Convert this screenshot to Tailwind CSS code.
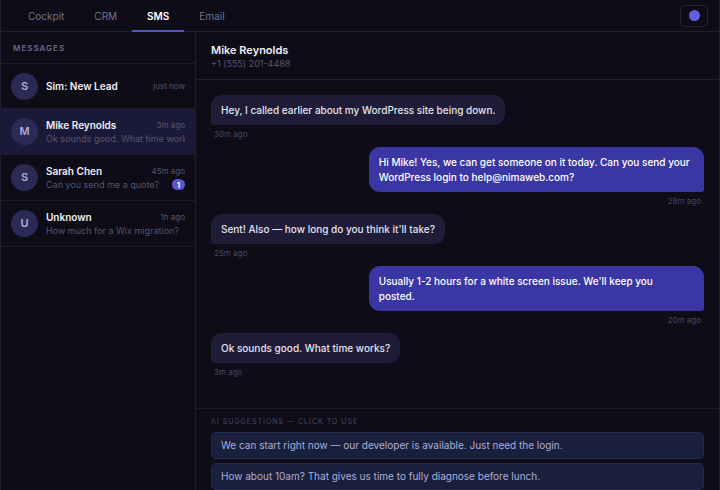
<!DOCTYPE html>
<html lang="en">
<head>
  <meta charset="UTF-8" />
  <meta name="viewport" content="width=device-width, initial-scale=1.0" />
  <title>SMS | Messages</title>
  <script src="https://cdn.jsdelivr.net/npm/@tailwindcss/browser@4"></script>
</head>
<body class="bg-[#0d0c17] font-['Inter',sans-serif] text-[#e4e3f0]">
  <div class="flex flex-col h-screen overflow-hidden border-x border-[#1e1d33]">

    <!-- Top bar -->
    <header class="flex items-stretch justify-between h-8 shrink-0 border-b border-[#211f33] pl-3 pr-[11px]">
      <nav class="flex -mb-px text-[10px] text-[#74728f]">
        <a href="#" class="flex items-center px-[15px]">Cockpit</a>
        <a href="#" class="flex items-center px-[15px]">CRM</a>
        <a href="#" class="flex items-center px-[15px] font-semibold text-white border-b-2 border-[#5651c4] pt-[2px]">SMS</a>
        <a href="#" class="flex items-center px-[15px]">Email</a>
      </nav>
      <button type="button" aria-label="Status" class="self-center flex items-center justify-center w-7 h-[22px] rounded-[5px] border border-[#26243a]">
        <span class="w-[11px] h-[11px] rounded-full bg-[#6460e0]"></span>
      </button>
    </header>

    <div class="flex flex-1 min-h-0">

      <!-- Conversation list -->
      <aside class="w-[195px] shrink-0 border-r border-[#211f33]">
        <h2 class="flex items-center h-8 px-3 border-b border-[#1c1b2c] text-[8px] font-semibold tracking-[1px] text-[#6a6884]">MESSAGES</h2>
        <ul>
          <li>
            <a href="#" class="flex items-center gap-2 h-[45px] px-[10px] border-b border-[#1c1b2c]">
              <span class="flex items-center justify-center w-[27px] h-[27px] shrink-0 rounded-full bg-[#2b2955] text-[11px] font-semibold text-[#b0addb]">S</span>
              <span class="flex flex-1 min-w-0 items-center justify-between">
                <span class="text-[10px] leading-[14px] font-semibold text-[#f0eff8]">Sim: New Lead</span>
                <span class="text-[8px] text-[#57556f]">just now</span>
              </span>
            </a>
          </li>
          <li>
            <a href="#" class="flex items-center gap-2 h-[46px] px-[10px] border-b border-[#1c1b2c] bg-[#1b1938]">
              <span class="flex items-center justify-center w-[27px] h-[27px] shrink-0 rounded-full bg-[#2b2955] text-[11px] font-semibold text-[#b0addb]">M</span>
              <span class="flex-1 min-w-0">
                <span class="flex items-center justify-between">
                  <span class="text-[10px] leading-[14px] font-semibold text-[#f0eff8]">Mike Reynolds</span>
                  <span class="text-[8px] text-[#57556f]">3m ago</span>
                </span>
                <span class="block overflow-hidden whitespace-nowrap text-[9px] leading-[14px] text-[#57556f]">Ok sounds good. What time works?</span>
              </span>
            </a>
          </li>
          <li>
            <a href="#" class="flex items-center gap-2 h-[46px] px-[10px] border-b border-[#1c1b2c]">
              <span class="flex items-center justify-center w-[27px] h-[27px] shrink-0 rounded-full bg-[#2b2955] text-[11px] font-semibold text-[#b0addb]">S</span>
              <span class="flex-1 min-w-0">
                <span class="flex items-center justify-between">
                  <span class="text-[10px] leading-[14px] font-semibold text-[#f0eff8]">Sarah Chen</span>
                  <span class="text-[8px] text-[#57556f]">45m ago</span>
                </span>
                <span class="flex items-center justify-between h-[14px]">
                  <span class="overflow-hidden whitespace-nowrap text-[9px] leading-[14px] text-[#57556f]">Can you send me a quote?</span>
                  <span class="flex items-center justify-center w-[13px] h-[11px] rounded-full bg-[#5b57d6] text-[8px] font-bold text-white">1</span>
                </span>
              </span>
            </a>
          </li>
          <li>
            <a href="#" class="flex items-center gap-2 h-[46px] px-[10px] border-b border-[#1c1b2c]">
              <span class="flex items-center justify-center w-[27px] h-[27px] shrink-0 rounded-full bg-[#2b2955] text-[11px] font-semibold text-[#b0addb]">U</span>
              <span class="flex-1 min-w-0">
                <span class="flex items-center justify-between">
                  <span class="text-[10px] leading-[14px] font-semibold text-[#f0eff8]">Unknown</span>
                  <span class="text-[8px] text-[#57556f]">1h ago</span>
                </span>
                <span class="block overflow-hidden whitespace-nowrap text-[9px] leading-[14px] text-[#57556f]">How much for a Wix migration?</span>
              </span>
            </a>
          </li>
        </ul>
      </aside>

      <!-- Chat -->
      <main class="flex flex-col flex-1 min-w-0">
        <div class="shrink-0 px-[15px] pt-[11px] pb-2 border-b border-[#211f33]">
          <h1 class="text-[11px] leading-[14px] font-semibold text-[#f0eff8]">Mike Reynolds</h1>
          <p class="text-[9px] leading-[14px] text-[#57556f]">+1 (555) 201-4488</p>
        </div>

        <div class="flex flex-col flex-1 min-h-0 gap-[7px] px-[15px] pt-[15px] overflow-hidden text-[10px] leading-[15px] font-medium">
          <div class="flex flex-col items-start gap-[3px]">
            <p class="max-w-[68%] px-[10px] pt-2 pb-[7px] rounded-[11px] rounded-bl-[3px] bg-[#1e1c36]">Hey, I called earlier about my WordPress site being down.</p>
            <time class="px-[3px] text-[8px] leading-[12px] font-normal text-[#4a4862]">30m ago</time>
          </div>
          <div class="flex flex-col items-end gap-[3px]">
            <p class="w-[68%] px-[10px] pt-2 pb-[7px] rounded-[11px] rounded-br-[3px] bg-[#3a36a3] text-white">Hi Mike! Yes, we can get someone on it today. Can you send your WordPress login to help@nimaweb.com?</p>
            <time class="px-[3px] text-[8px] leading-[12px] font-normal text-[#4a4862]">28m ago</time>
          </div>
          <div class="flex flex-col items-start gap-[3px]">
            <p class="max-w-[68%] px-[10px] pt-2 pb-[7px] rounded-[11px] rounded-bl-[3px] bg-[#1e1c36]">Sent! Also — how long do you think it'll take?</p>
            <time class="px-[3px] text-[8px] leading-[12px] font-normal text-[#4a4862]">25m ago</time>
          </div>
          <div class="flex flex-col items-end gap-[3px]">
            <p class="w-[68%] px-[10px] pt-2 pb-[7px] rounded-[11px] rounded-br-[3px] bg-[#3a36a3] text-white">Usually 1-2 hours for a white screen issue. We'll keep you<br />posted.</p>
            <time class="px-[3px] text-[8px] leading-[12px] font-normal text-[#4a4862]">20m ago</time>
          </div>
          <div class="flex flex-col items-start gap-[3px]">
            <p class="max-w-[68%] px-[10px] pt-2 pb-[7px] rounded-[11px] rounded-bl-[3px] bg-[#1e1c36]">Ok sounds good. What time works?</p>
            <time class="px-[3px] text-[8px] leading-[12px] font-normal text-[#4a4862]">3m ago</time>
          </div>
        </div>

        <!-- AI suggestions -->
        <section class="flex flex-col gap-1 shrink-0 px-[15px] pt-[7px] border-t border-[#1c1b2c]">
          <h3 class="text-[7px] leading-[12px] tracking-[1px] text-[#4a4862]">AI SUGGESTIONS — CLICK TO USE</h3>
          <button type="button" class="h-[27px] px-[9px] text-left rounded-[5px] border border-[#252a4b] bg-[#18203c] text-[10px] text-[#b0addb]">We can start right now — our developer is available. Just need the login.</button>
          <button type="button" class="h-[27px] px-[9px] text-left rounded-[5px] border border-[#252a4b] bg-[#18203c] text-[10px] text-[#b0addb]">How about 10am? That gives us time to fully diagnose before lunch.</button>
        </section>
      </main>
    </div>
  </div>
</body>
</html>
